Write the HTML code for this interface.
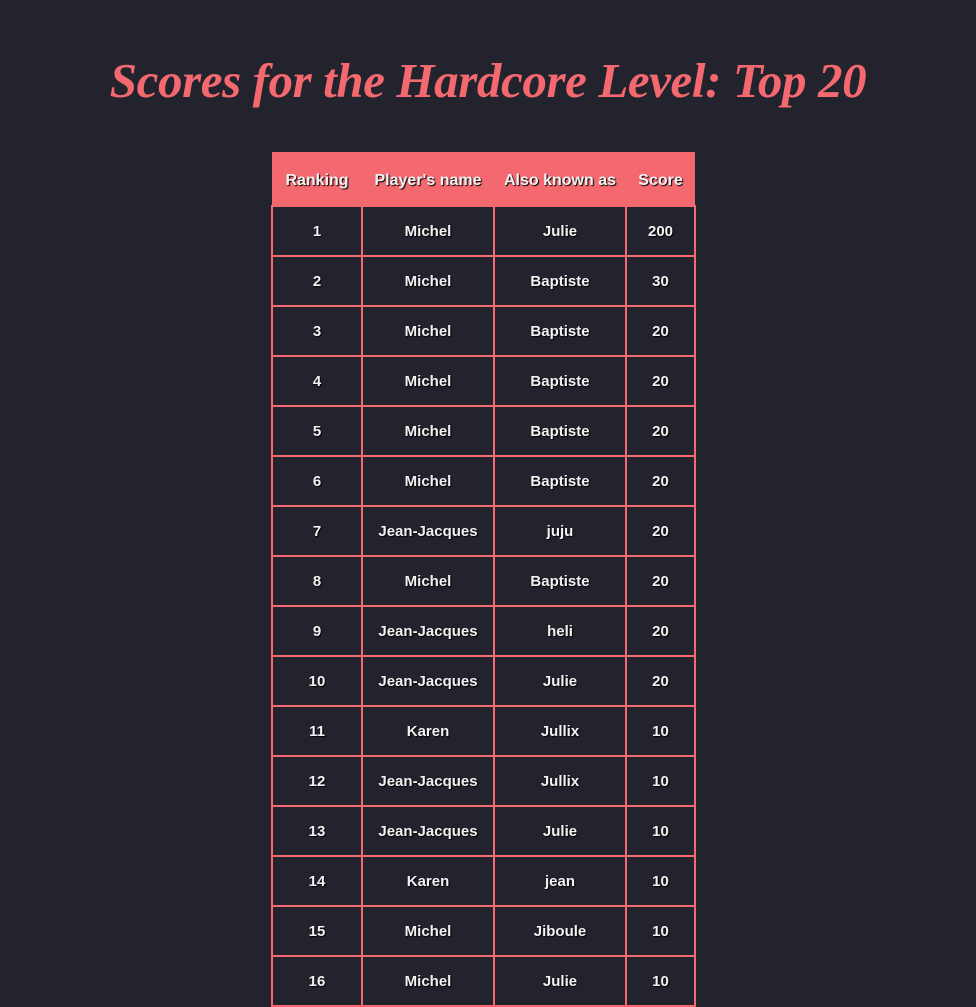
<!DOCTYPE html>
<html><head><meta charset="utf-8"><style>
html,body{margin:0;padding:0;background:#22232d;width:976px;height:959px;overflow:hidden}
h1{margin:0;position:absolute;top:48px;left:0;width:976px;text-align:center;font-family:"Liberation Serif",serif;font-style:italic;font-weight:bold;font-size:49px;color:#f4686f;letter-spacing:-0.4px;line-height:66px}
table{position:absolute;left:271px;top:152px;border-collapse:collapse;font-family:"Liberation Sans",sans-serif;font-weight:bold;font-size:15px;color:#f2f2f2;text-shadow:1px 1px 1px #000}
th{background:#f4686f;height:49px;padding:4px 0 0 0;font-size:16px;border:none}
td{border:2px solid #f4686f;height:48px;padding:0;text-align:center}
th.a,td.a{width:88px}th.b,td.b{width:130px}th.c,td.c{width:130px}th.d,td.d{width:67px}
</style></head><body>
<h1>Scores for the Hardcore Level: Top 20</h1>
<table>
<tr><th class="a">Ranking</th><th class="b">Player's name</th><th class="c">Also known as</th><th class="d">Score</th></tr>
<tr><td class="a">1</td><td class="b">Michel</td><td class="c">Julie</td><td class="d">200</td></tr>
<tr><td class="a">2</td><td class="b">Michel</td><td class="c">Baptiste</td><td class="d">30</td></tr>
<tr><td class="a">3</td><td class="b">Michel</td><td class="c">Baptiste</td><td class="d">20</td></tr>
<tr><td class="a">4</td><td class="b">Michel</td><td class="c">Baptiste</td><td class="d">20</td></tr>
<tr><td class="a">5</td><td class="b">Michel</td><td class="c">Baptiste</td><td class="d">20</td></tr>
<tr><td class="a">6</td><td class="b">Michel</td><td class="c">Baptiste</td><td class="d">20</td></tr>
<tr><td class="a">7</td><td class="b">Jean-Jacques</td><td class="c">juju</td><td class="d">20</td></tr>
<tr><td class="a">8</td><td class="b">Michel</td><td class="c">Baptiste</td><td class="d">20</td></tr>
<tr><td class="a">9</td><td class="b">Jean-Jacques</td><td class="c">heli</td><td class="d">20</td></tr>
<tr><td class="a">10</td><td class="b">Jean-Jacques</td><td class="c">Julie</td><td class="d">20</td></tr>
<tr><td class="a">11</td><td class="b">Karen</td><td class="c">Jullix</td><td class="d">10</td></tr>
<tr><td class="a">12</td><td class="b">Jean-Jacques</td><td class="c">Jullix</td><td class="d">10</td></tr>
<tr><td class="a">13</td><td class="b">Jean-Jacques</td><td class="c">Julie</td><td class="d">10</td></tr>
<tr><td class="a">14</td><td class="b">Karen</td><td class="c">jean</td><td class="d">10</td></tr>
<tr><td class="a">15</td><td class="b">Michel</td><td class="c">Jiboule</td><td class="d">10</td></tr>
<tr><td class="a">16</td><td class="b">Michel</td><td class="c">Julie</td><td class="d">10</td></tr>
</table>
</body></html>
